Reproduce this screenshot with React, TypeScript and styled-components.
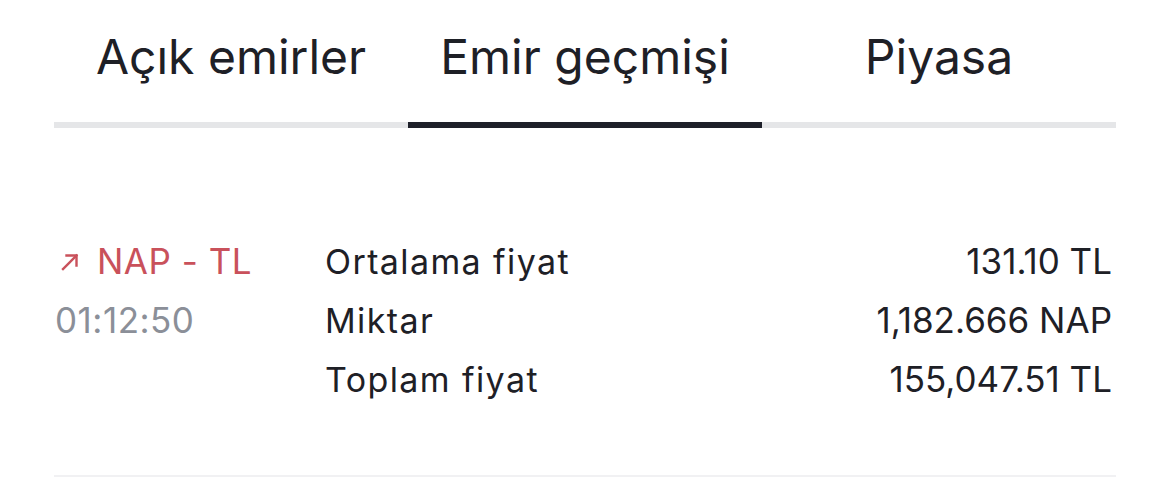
import React from "react";
import styled, { createGlobalStyle } from "styled-components";

const Global = createGlobalStyle`
  html, body { margin: 0; padding: 0; background: #ffffff; }
  body { font-family: Inter, "Noto Sans", "Liberation Sans", sans-serif; color: #1e2026; }
`;

const Page = styled.div`
  padding: 0 54px;
`;

const TabBar = styled.div`
  display: grid;
  grid-template-columns: repeat(3, 1fr);
`;

const Tab = styled.div<{ $active?: boolean }>`
  height: 122px;
  border-bottom: 6px solid ${(p) => (p.$active ? "#1e2029" : "#e5e6e8")};
  display: flex;
  justify-content: center;
  align-items: flex-start;
  font-size: 48px;
  line-height: 58px;
  color: #1e2026;
  & > span {
    margin-top: 28px;
  }
`;

const Order = styled.div`
  display: grid;
  grid-template-columns: 271px 1fr auto;
  padding: 104px 4px 66px 0;
  border-bottom: 2px solid #f1f1f3;
  font-size: 35px;
  line-height: 59px;
`;

const Pair = styled.div`
  display: flex;
  flex-direction: column;
  letter-spacing: 0.5px;
`;

const Symbol = styled.div`
  display: flex;
  align-items: center;
  gap: 17px;
  color: #c9515b;
  padding-left: 6px;
`;

const Time = styled.div`
  color: #8b8f98;
  padding-left: 1px;
`;

const Labels = styled.div`
  display: flex;
  flex-direction: column;
  color: #1e2026;
  font-size: 34px;
  letter-spacing: 1.4px;
`;

const Values = styled.div`
  display: flex;
  flex-direction: column;
  align-items: flex-end;
  color: #1e2026;
`;

const ArrowIcon = () => (
  <svg width="20" height="20" viewBox="0 0 20 20" fill="none" stroke="#c9515b" strokeWidth="2.4" strokeLinecap="square">
    <path d="M3 17 L16.5 3.5" />
    <path d="M6.5 3.5 H16.5 V13.5" />
  </svg>
);

export default function App() {
  return (
    <>
      <Global />
      <Page>
        <TabBar>
          <Tab><span>Açık emirler</span></Tab>
          <Tab $active><span>Emir geçmişi</span></Tab>
          <Tab><span>Piyasa</span></Tab>
        </TabBar>
        <Order>
          <Pair>
            <Symbol>
              <ArrowIcon />
              <span>NAP - TL</span>
            </Symbol>
            <Time>01:12:50</Time>
          </Pair>
          <Labels>
            <span>Ortalama fiyat</span>
            <span>Miktar</span>
            <span>Toplam fiyat</span>
          </Labels>
          <Values>
            <span>131.10 TL</span>
            <span>1,182.666 NAP</span>
            <span>155,047.51 TL</span>
          </Values>
        </Order>
      </Page>
    </>
  );
}
